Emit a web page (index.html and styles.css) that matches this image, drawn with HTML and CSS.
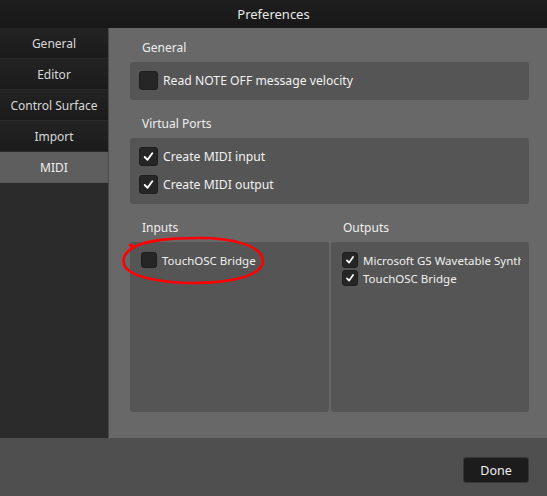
FILE: index.html
```html
<!DOCTYPE html>
<html>
<head>
<meta charset="utf-8">
<link rel="stylesheet" href="styles.css">
</head>
<body>
<div class="window">
  <div class="titlebar">Preferences</div>
  <div class="main">
    <nav class="sidebar">
      <div class="nav-item">General</div>
      <div class="nav-item">Editor</div>
      <div class="nav-item">Control Surface</div>
      <div class="nav-item">Import</div>
      <div class="nav-item selected">MIDI</div>
    </nav>
    <section class="content">
      <div class="heading first">General</div>
      <div class="group">
        <label class="check-row">
          <span class="box"></span>
          <span class="label">Read NOTE OFF message velocity</span>
        </label>
      </div>

      <div class="heading">Virtual Ports</div>
      <div class="group">
        <label class="check-row">
          <span class="box"><svg viewBox="0 0 18 18"><polyline points="5,9.5 8,12.5 13,5.5"/></svg></span>
          <span class="label">Create MIDI input</span>
        </label>
        <label class="check-row">
          <span class="box"><svg viewBox="0 0 18 18"><polyline points="5,9.5 8,12.5 13,5.5"/></svg></span>
          <span class="label">Create MIDI output</span>
        </label>
      </div>

      <div class="ports">
        <div class="port-col">
          <div class="heading">Inputs</div>
          <div class="group list">
            <label class="small-row">
              <span class="box sm"></span>
              <span class="label">TouchOSC Bridge</span>
            </label>
          </div>
        </div>
        <div class="port-col">
          <div class="heading">Outputs</div>
          <div class="group list">
            <label class="small-row">
              <span class="box sm"><svg viewBox="0 0 16 16"><polyline points="4.5,8.5 7,11 11.5,4.5"/></svg></span>
              <span class="label">Microsoft GS Wavetable Synth</span>
            </label>
            <label class="small-row">
              <span class="box sm"><svg viewBox="0 0 16 16"><polyline points="4.5,8.5 7,11 11.5,4.5"/></svg></span>
              <span class="label">TouchOSC Bridge</span>
            </label>
          </div>
        </div>
      </div>

      <svg class="annotation" viewBox="0 0 150 55" width="150" height="55">
        <path d="M14,14 C8,17 3,23 5,30 C8,42 40,49 75,49 C115,49 144,41 144,27 C144,12 115,4 80,4 C50,4 30,6 15,13 L11,11"/>
      </svg>
    </section>
  </div>
  <div class="footer">
    <button class="done">Done</button>
  </div>
</div>
</body>
</html>
```

FILE: styles.css
```css
html, body {
  margin: 0;
  padding: 0;
  background: #4f4f4f;
}

body {
  font-family: "Noto Sans", "DejaVu Sans", sans-serif;
  color: #ececec;
}

.window {
  width: 547px;
  height: 496px;
  display: flex;
  flex-direction: column;
  overflow: hidden;
}

.titlebar {
  height: 28px;
  flex: none;
  background: linear-gradient(#1e1e1e, #181818);
  display: flex;
  align-items: center;
  justify-content: center;
  font-size: 13px;
  color: #e8e8e8;
}

.main {
  height: 410px;
  flex: none;
  display: flex;
}

.sidebar {
  width: 108px;
  flex: none;
  background: #2b2b2b;
  border-right: 1px solid #4a4a4a;
  display: flex;
  flex-direction: column;
}

.nav-item {
  height: 30px;
  border-bottom: 1px solid #2a2a2a;
  background: linear-gradient(#232323, #1b1b1b);
  display: flex;
  align-items: center;
  justify-content: center;
  font-size: 12px;
  color: #d8d8d8;
}

.nav-item.selected {
  background: #5e5e5e;
  color: #f0f0f0;
  border-bottom-color: #555;
}

.content {
  flex: 1;
  position: relative;
  background: #686868;
  padding: 0 18px 0 21px;
}

.heading {
  font-size: 12px;
  line-height: 16px;
  padding-left: 12px;
  margin-top: 16px;
  margin-bottom: 6px;
  color: #eeeeee;
}

.heading.first {
  margin-top: 12px;
}

.group {
  background: #555555;
  border-radius: 3px;
  padding: 9px 9px 10px;
  display: flex;
  flex-direction: column;
  gap: 9px;
}

.check-row {
  display: flex;
  align-items: center;
  gap: 5px;
  height: 19px;
}

.check-row .label {
  font-size: 12.2px;
  color: #f2f2f2;
  white-space: nowrap;
}

.box {
  width: 19px;
  height: 19px;
  flex: none;
  box-sizing: border-box;
  background: #262626;
  border: 1px solid #1e1e1e;
  border-radius: 3px;
  display: flex;
}

.box svg {
  width: 100%;
  height: 100%;
}

.box polyline {
  fill: none;
  stroke: #ffffff;
  stroke-width: 2;
  stroke-linecap: round;
  stroke-linejoin: round;
}

.ports {
  display: grid;
  grid-template-columns: 199px 198px;
  column-gap: 2px;
}

.group.list {
  height: 170px;
  box-sizing: border-box;
  padding: 10px 8px 10px 11px;
  gap: 2px;
  overflow: hidden;
}

.small-row {
  display: flex;
  align-items: center;
  gap: 5px;
  height: 16px;
  white-space: nowrap;
  overflow: hidden;
}

.box.sm {
  width: 16px;
  height: 16px;
}

.small-row .label {
  font-size: 11.5px;
  color: #f0f0f0;
}

.annotation {
  position: absolute;
  left: 10px;
  top: 206px;
  overflow: visible;
}

.annotation path {
  fill: none;
  stroke: #ff0000;
  stroke-width: 2.6;
  stroke-linecap: round;
  stroke-linejoin: round;
}

.footer {
  flex: 1;
  background: #4f4f4f;
  display: flex;
  align-items: center;
  justify-content: flex-end;
  padding-right: 18px;
}

.done {
  width: 66px;
  height: 26px;
  margin-top: 6px;
  background: #1c1c1c;
  border: 1px solid #383838;
  border-radius: 3px;
  color: #f0f0f0;
  font-family: "Noto Sans", "DejaVu Sans", sans-serif;
  font-size: 12.5px;
  padding: 0;
}
```
